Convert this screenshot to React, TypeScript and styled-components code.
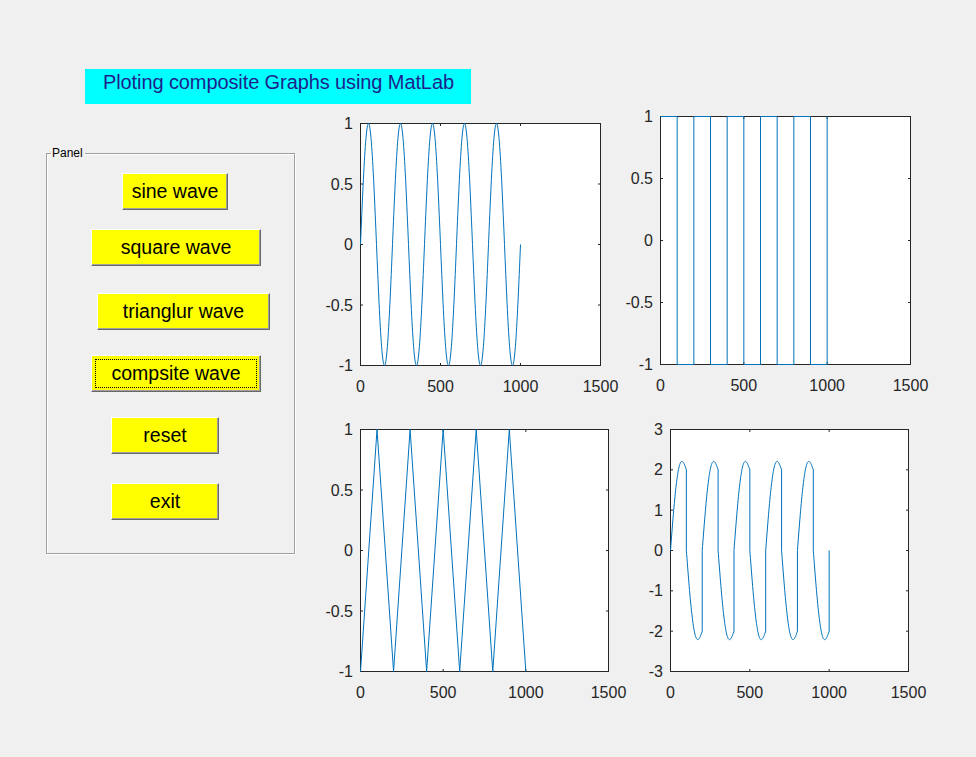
import React from 'react';
import styled, { createGlobalStyle, css } from 'styled-components';

const GlobalStyle = createGlobalStyle`
  html, body {
    margin: 0;
    padding: 0;
    background: #f0f0f0;
  }
  body {
    font-family: "Liberation Sans", Arial, sans-serif;
  }
`;

const Page = styled.div`
  width: 976px;
  height: 757px;
  box-sizing: border-box;
  padding: 69px 0 0 46px;
  background: #f0f0f0;
  overflow: hidden;
`;

const Title = styled.div`
  margin-left: 39px;
  width: 386px;
  height: 35px;
  box-sizing: border-box;
  padding: 2px 0 0 18px;
  background: #00ffff;
  color: #1f1f8c;
  font-size: 20px;
  line-height: 23px;
  letter-spacing: -0.1px;
  white-space: nowrap;
`;

const Main = styled.div`
  display: flex;
  align-items: flex-start;
`;

const Panel = styled.div`
  position: relative;
  margin-top: 49px;
  width: 249px;
  height: 401px;
  box-sizing: border-box;
  border: 1px solid #a0a0a0;
  box-shadow: inset 1px 1px 0 #ffffff, 1px 1px 0 #ffffff;
  display: flex;
  flex-direction: column;
  align-items: flex-start;
`;

const PanelLabel = styled.span`
  position: absolute;
  top: -8px;
  left: 4px;
  padding: 0 2px 0 1px;
  background: #f0f0f0;
  font-size: 12px;
  line-height: 14px;
  color: #000;
`;

const WaveButton = styled.button<{ $left: number; $top: number; $w: number; $focused?: boolean }>`
  position: relative;
  margin: ${(p) => p.$top}px 0 0 ${(p) => p.$left}px;
  width: ${(p) => p.$w}px;
  height: 37px;
  box-sizing: border-box;
  padding: 0;
  background: #ffff00;
  color: #000;
  font-family: "Liberation Sans", Arial, sans-serif;
  font-size: 19.5px;
  border: 1px solid;
  border-color: #ffffff #696969 #696969 #ffffff;
  box-shadow: inset -1px -1px 0 #a0a0a0;
  display: flex;
  align-items: center;
  justify-content: center;
  white-space: nowrap;
  cursor: default;
  outline: none;
  ${(p) =>
    p.$focused &&
    css`
      &::after {
        content: '';
        position: absolute;
        inset: 3px;
        border: 1px dotted #000;
      }
    `}
`;

const ChartGrid = styled.div`
  margin: 12px 0 0 65px;
  display: grid;
  grid-template-columns: 300px auto;
  row-gap: 63px;
  align-items: start;
`;

const AxesSvg = styled.svg<{ $mt?: number; $ml?: number }>`
  display: block;
  overflow: visible;
  margin: ${(p) => p.$mt ?? 0}px 0 0 ${(p) => p.$ml ?? 0}px;
`;

const TickLabel = styled.text`
  font-family: "Liberation Sans", Arial, sans-serif;
  font-size: 16px;
  fill: #262626;
`;

type Pt = [number, number];
const XMAX = 1500;
const XTICKS = [0, 500, 1000, 1500];

const sinAt = (x: number) => Math.sin((2 * Math.PI * x) / 200);
const triAt = (x: number) => {
  const m = ((x % 200) + 200) % 200;
  return m <= 100 ? -1 + (2 * m) / 100 : 1 - (2 * (m - 100)) / 100;
};

const sinePts: Pt[] = [];
for (let x = 0; x <= 1000; x += 2) sinePts.push([x, sinAt(x)]);

const squarePts: Pt[] = [];
for (let k = 0; k < 10; k++) {
  const v = k % 2 === 0 ? 1 : -1;
  squarePts.push([k * 100, v], [(k + 1) * 100, v]);
}
squarePts.push([1000, 1]);

const triPts: Pt[] = [];
for (let k = 0; k <= 10; k++) triPts.push([k * 100, k % 2 === 0 ? -1 : 1]);

const compPts: Pt[] = [];
for (let k = 0; k < 10; k++) {
  const sq = k % 2 === 0 ? 1 : -1;
  for (let x = k * 100; x <= (k + 1) * 100; x += 2) {
    compPts.push([x, sinAt(x) + sq + triAt(x)]);
  }
}
compPts.push([1000, 0]);

interface ChartProps {
  w: number;
  h: number;
  yMin: number;
  yMax: number;
  yTicks: number[];
  points: Pt[];
  mt?: number;
  ml?: number;
}

const Chart: React.FC<ChartProps> = ({ w, h, yMin, yMax, yTicks, points, mt, ml }) => {
  const mx = (x: number) => 0.5 + (x / XMAX) * (w - 1);
  const my = (y: number) => 0.5 + ((yMax - y) / (yMax - yMin)) * (h - 1);
  const d = points
    .map(([x, y], i) => `${i ? 'L' : 'M'}${mx(x).toFixed(2)} ${my(y).toFixed(2)}`)
    .join('');
  const tl = 2.5;
  return (
    <AxesSvg width={w} height={h} $mt={mt} $ml={ml}>
      <rect x={0.5} y={0.5} width={w - 1} height={h - 1} fill="#ffffff" stroke="#262626" strokeWidth={1} />
      {XTICKS.map((t) => (
        <g key={`x${t}`}>
          <line x1={mx(t)} x2={mx(t)} y1={h - 0.5} y2={h - 0.5 - tl} stroke="#262626" />
          <line x1={mx(t)} x2={mx(t)} y1={0.5} y2={0.5 + tl} stroke="#262626" />
          <TickLabel x={mx(t)} y={h + 26} textAnchor="middle">
            {t}
          </TickLabel>
        </g>
      ))}
      {yTicks.map((t) => (
        <g key={`y${t}`}>
          <line x1={0.5} x2={0.5 + tl} y1={my(t)} y2={my(t)} stroke="#262626" />
          <line x1={w - 0.5} x2={w - 0.5 - tl} y1={my(t)} y2={my(t)} stroke="#262626" />
          <TickLabel x={-7} y={my(t) + 5.5} textAnchor="end">
            {String(t)}
          </TickLabel>
        </g>
      ))}
      <path d={d} fill="none" stroke="#0072bd" strokeWidth={1} strokeLinejoin="round" />
    </AxesSvg>
  );
};

const UNIT_TICKS = [-1, -0.5, 0, 0.5, 1];
const COMP_TICKS = [-3, -2, -1, 0, 1, 2, 3];

export default function App() {
  return (
    <>
      <GlobalStyle />
      <Page>
        <Title>Ploting composite Graphs using MatLab</Title>
        <Main>
          <Panel>
            <PanelLabel>Panel</PanelLabel>
            <WaveButton $left={75} $top={19} $w={106}>sine wave</WaveButton>
            <WaveButton $left={44} $top={19} $w={170}>square wave</WaveButton>
            <WaveButton $left={50} $top={27} $w={173}>trianglur wave</WaveButton>
            <WaveButton $left={44} $top={25} $w={170} $focused>
              compsite wave
            </WaveButton>
            <WaveButton $left={64} $top={25} $w={108}>reset</WaveButton>
            <WaveButton $left={64} $top={29} $w={108}>exit</WaveButton>
          </Panel>
          <ChartGrid>
            <Chart w={241} h={243} mt={7} yMin={-1} yMax={1} yTicks={UNIT_TICKS} points={sinePts} />
            <Chart w={251} h={249} yMin={-1} yMax={1} yTicks={UNIT_TICKS} points={squarePts} />
            <Chart w={249} h={243} yMin={-1} yMax={1} yTicks={UNIT_TICKS} points={triPts} />
            <Chart w={239} h={243} ml={10} yMin={-3} yMax={3} yTicks={COMP_TICKS} points={compPts} />
          </ChartGrid>
        </Main>
      </Page>
    </>
  );
}
